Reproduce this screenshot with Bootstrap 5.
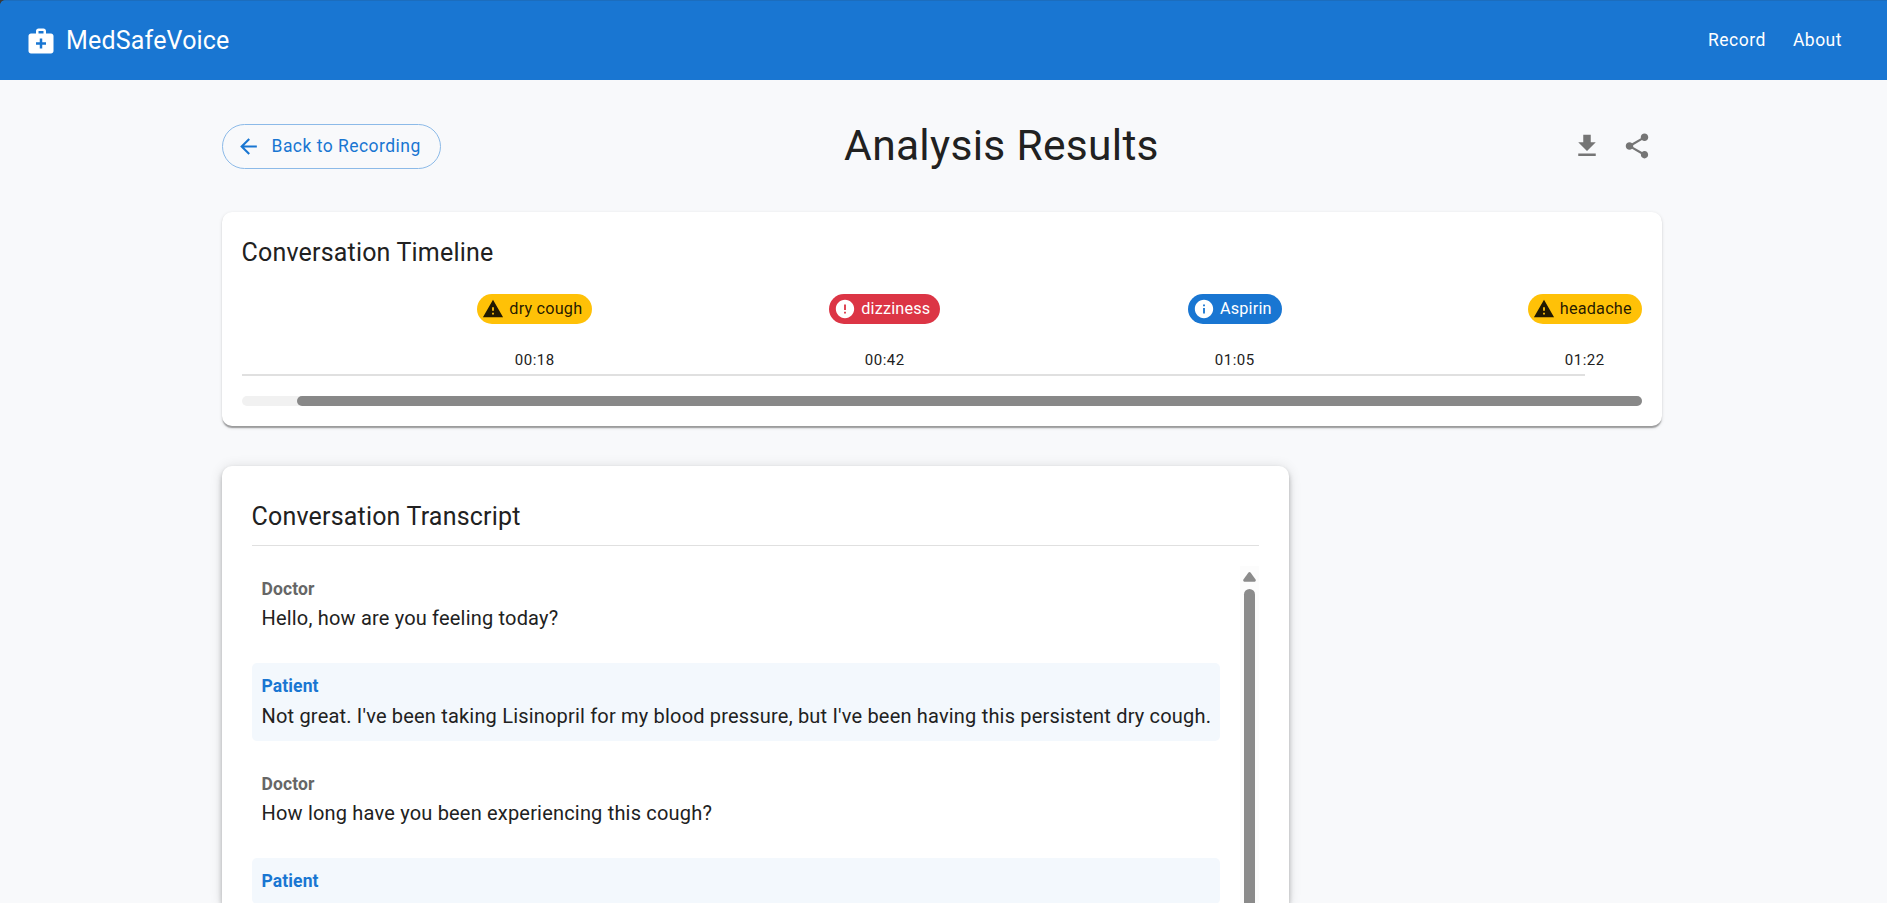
<!DOCTYPE html>
<html lang="en">
<head>
<meta charset="utf-8">
<meta name="viewport" content="width=device-width, initial-scale=1">
<title>MedSafeVoice</title>
<link rel="stylesheet" href="https://cdn.jsdelivr.net/npm/bootstrap@5.3.0/dist/css/bootstrap.min.css">
<style>
  body { font-family: Roboto, "Liberation Sans", sans-serif; font-size: 20px; line-height: 1.5; letter-spacing: .00938em; color: #212121; background: #f8f9fb; height: 100vh; overflow: hidden; }
  svg { display: block; fill: currentColor; flex-shrink: 0; }
  .topbar { height: 80px; background: #1976d2; padding: 0 45px 0 26px; border-top: 1px solid #1c6dbd; }
  .corner { top: 0; left: 0; width: 5px; height: 5px; background: radial-gradient(circle at 5px 5px, transparent 4.5px, #3b3b3b 5.2px); }
  .brand-name { font-size: 25px; line-height: 1.6; letter-spacing: .0075em; margin-left: 10px; }
  .topbar .nav-link { font-size: 17.5px; font-weight: 400; line-height: 1.75; letter-spacing: .02857em; color: #fff; padding: 0; }
  .topbar .nav-link + .nav-link { margin-left: 27px; }
  .page { width: 1440px; margin: 43px auto 0 221.5px; min-height: 0; }
  .back-btn { height: 45px; width: 219px; border: 1px solid #8cbae8; border-radius: 23px; color: #1976d2; font-size: 17.5px; letter-spacing: .027em; line-height: 1; padding: 0 0 0 13.5px; }
  .back-btn svg { margin-right: 10.5px; }
  .back-btn span { padding-top: 1px; }
  .page-title { font-size: 42.5px; line-height: 1.235; letter-spacing: .00735em; font-weight: 400; margin: -4px 0; }
  .tools { margin-right: -1px; }
  .tool-btn { width: 50px; height: 50px; margin: -2px 0; color: #757575; padding: 0; border: 0; }
  .panel { border: 0; border-radius: 10px; background: #fff; }
  .panel-title { font-size: 25px; line-height: 41px; height: 40px; letter-spacing: .0075em; font-weight: 400; margin: 0; }
  .timeline { margin-top: 43px; height: 214px; flex-shrink: 0; padding: 20px; box-shadow: 0 2.5px 1.25px -1.25px rgba(0,0,0,.2), 0 1.25px 1.25px rgba(0,0,0,.14), 0 1.25px 3.75px rgba(0,0,0,.12); }
  .track { margin-top: 22px; height: 82px; overflow: hidden; }
  .events { margin-left: 118.3px; width: 1400px; }
  .event { width: 350px; }
  .tag { height: 30px; border-radius: 15px; font-size: 16.25px; line-height: 30px; padding: 0 10px 0 5px; gap: 5px; }
  .tag-warning { background: #ffc107; color: rgba(0,0,0,.87); }
  .tag-danger { background: #dc3545; color: #fff; }
  .tag-info { background: #1976d2; color: #fff; }
  .stamp { font-size: 15px; line-height: 25px; letter-spacing: .03333em; margin-top: 24px; }
  .axis { height: 2px; width: 1343px; background: #e0e0e0; margin-top: 1px; }
  .hbar { height: 10px; border-radius: 5px; background: #f1f1f1; margin-top: 20px; }
  .hbar div { height: 10px; border-radius: 5px; background: #888; margin-left: 55px; }
  .transcript { width: 1067px; min-height: 0; margin-top: 40px; padding: 30px 30px 0; border-radius: 10px 10px 0 0; box-shadow: 0 2.5px 5px -1.25px rgba(0,0,0,.2), 0 5px 6.25px rgba(0,0,0,.14), 0 1.25px 12.5px rgba(0,0,0,.12); }
  .transcript .panel-title { height: 50px; flex-shrink: 0; border-bottom: 1px solid #e0e0e0; }
  .scroller { margin-top: 19.5px; min-height: 0; overflow: hidden; }
  .lines { width: 968px; }
  .utterance { padding: 10px; margin-bottom: 20px; border-radius: 5px; }
  .utterance.patient { background: #f3f8fd; }
  .who { font-size: 17.5px; line-height: 27.5px; letter-spacing: .00714em; font-weight: 700; color: #666; }
  .patient .who { color: #1976d2; }
  .vbar { width: 19px; background: #fcfcfc; }
  .vbar svg { margin-top: 6px; color: #8b8b8b; }
  .thumb { width: 11px; border-radius: 6px 6px 0 0; background: #8b8b8b; margin-top: 7px; }
</style>
</head>
<body class="d-flex flex-column">
<header class="topbar d-flex flex-shrink-0 align-items-center justify-content-between text-white">
  <div class="corner position-absolute"></div>
  <div class="d-flex align-items-center">
    <svg width="30" height="30" viewBox="0 0 24 24"><path d="M20 6h-4V4c0-1.100-.9-2-2-2h-4c-1.100 0-2 .9-2 2v2H4c-1.100 0-2 .9-2 2v12c0 1.100.9 2 2 2h16c1.100 0 2-.9 2-2V8c0-1.100-.9-2-2-2zM10 4h4v2h-4V4zm6 11h-3v3h-2v-3H8v-2h3v-3h2v3h3v2z"/></svg>
    <span class="brand-name">MedSafeVoice</span>
  </div>
  <nav class="nav">
    <a class="nav-link" href="#">Record</a>
    <a class="nav-link" href="#">About</a>
  </nav>
</header>

<main class="page d-flex flex-column flex-fill">
  <div class="d-flex align-items-center justify-content-between">
    <a class="btn back-btn d-flex align-items-center" href="#">
      <svg width="25" height="25" viewBox="0 0 24 24"><path d="M20 11H7.830l5.590-5.590L12 4l-8 8 8 8 1.410-1.410L7.830 13H20v-2z"/></svg><span>Back to Recording</span>
    </a>
    <h1 class="page-title">Analysis Results</h1>
    <div class="tools d-flex">
      <button class="btn tool-btn d-flex align-items-center justify-content-center" aria-label="Download"><svg width="30" height="30" viewBox="0 0 24 24"><path d="M19 9h-4V3H9v6H5l7 7 7-7zM5 18v2h14v-2H5z"/></svg></button>
      <button class="btn tool-btn d-flex align-items-center justify-content-center" aria-label="Share"><svg width="30" height="30" viewBox="0 0 24 24"><path d="M18 16.080c-.76 0-1.440.3-1.960.77L8.910 12.700c.05-.23.09-.46.09-.7s-.04-.47-.09-.7l7.050-4.110c.54.5 1.250.81 2.040.81 1.660 0 3-1.340 3-3s-1.340-3-3-3-3 1.340-3 3c0 .24.04.47.09.7L8.040 9.810C7.500 9.310 6.790 9 6 9c-1.660 0-3 1.340-3 3s1.340 3 3 3c.79 0 1.500-.31 2.040-.81l7.120 4.160c-.05.21-.08.43-.08.65 0 1.610 1.310 2.920 2.920 2.920s2.920-1.310 2.920-2.920-1.310-2.920-2.920-2.920z"/></svg></button>
    </div>
  </div>

  <section class="panel timeline">
    <h2 class="panel-title">Conversation Timeline</h2>
    <div class="track">
      <div class="events d-flex">
        <div class="event d-flex flex-column align-items-center">
          <div class="tag tag-warning d-flex align-items-center"><svg width="22" height="22" viewBox="0 0 24 24"><path d="M1 21h22L12 2 1 21zm12-3h-2v-2h2v2zm0-4h-2v-4h2v4z"/></svg>dry cough</div>
          <div class="stamp">00:18</div>
        </div>
        <div class="event d-flex flex-column align-items-center">
          <div class="tag tag-danger d-flex align-items-center"><svg width="22" height="22" viewBox="0 0 24 24"><path d="M12 2C6.480 2 2 6.480 2 12s4.480 10 10 10 10-4.480 10-10S17.520 2 12 2zm1 15h-2v-2h2v2zm0-4h-2V7h2v6z"/></svg>dizziness</div>
          <div class="stamp">00:42</div>
        </div>
        <div class="event d-flex flex-column align-items-center">
          <div class="tag tag-info d-flex align-items-center"><svg width="22" height="22" viewBox="0 0 24 24"><path d="M12 2C6.480 2 2 6.480 2 12s4.480 10 10 10 10-4.480 10-10S17.520 2 12 2zm1 15h-2v-6h2v6zm0-8h-2V7h2v2z"/></svg>Aspirin</div>
          <div class="stamp">01:05</div>
        </div>
        <div class="event d-flex flex-column align-items-center">
          <div class="tag tag-warning d-flex align-items-center"><svg width="22" height="22" viewBox="0 0 24 24"><path d="M1 21h22L12 2 1 21zm12-3h-2v-2h2v2zm0-4h-2v-4h2v4z"/></svg>headache</div>
          <div class="stamp">01:22</div>
        </div>
      </div>
      <div class="axis"></div>
    </div>
    <div class="hbar"><div></div></div>
  </section>

  <section class="panel transcript d-flex flex-column flex-fill">
    <h2 class="panel-title">Conversation Transcript</h2>
    <div class="scroller d-flex flex-fill justify-content-between">
      <div class="lines">
        <div class="utterance"><div class="who">Doctor</div><div>Hello, how are you feeling today?</div></div>
        <div class="utterance patient"><div class="who">Patient</div><div class="text-nowrap">Not great. I've been taking Lisinopril for my blood pressure, but I've been having this persistent dry cough.</div></div>
        <div class="utterance"><div class="who">Doctor</div><div>How long have you been experiencing this cough?</div></div>
        <div class="utterance patient mb-0 pb-0"><div class="who">Patient</div><div class="pb-2"></div></div>
      </div>
      <div class="vbar d-flex flex-column align-items-center">
        <svg width="13" height="10" viewBox="0 0 13 10"><path d="M5.300.8Q6.500-.6 7.700.8L12.600 7.600Q13.300 9.600 11.600 9.800H1.400Q-.3 9.600.4 7.600z"/></svg>
        <div class="thumb flex-fill"></div>
      </div>
    </div>
  </section>
</main>
<script src="https://cdn.jsdelivr.net/npm/bootstrap@5.3.0/dist/js/bootstrap.bundle.min.js"></script>
</body>
</html>
